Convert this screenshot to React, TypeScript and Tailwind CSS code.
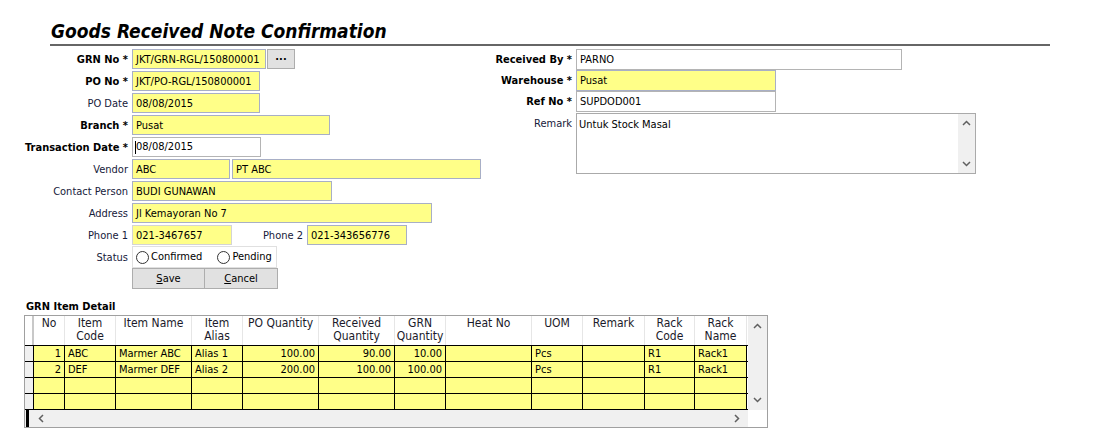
import React from "react";

const FONT = { fontFamily: '"DejaVu Sans Condensed", "DejaVu Sans", Tahoma, sans-serif' };

function Label({ text, bold, width = "w-[128px]" }: { text: string; bold?: boolean; width?: string }) {
  return (
    <div className={`${width} shrink-0 text-right pt-[4px] whitespace-nowrap ${bold ? "font-bold text-black" : "text-[#16203a]"}`}>
      {text}
    </div>
  );
}

function Box({ w, text, white, cls = "" }: { w: string; text?: string; white?: boolean; cls?: string }) {
  return (
    <div
      className={`${w} h-[20px] shrink-0 border px-[3px] leading-[19px] whitespace-nowrap overflow-hidden text-black ${
        white ? "bg-white border-[#b4b4b4]" : "bg-[#ffff88] border-[#a8afc6]"
      } ${cls}`}
    >
      {text}
    </div>
  );
}

function Row({ label, bold, children }: { label: string; bold?: boolean; children?: React.ReactNode }) {
  return (
    <div className="flex h-[22px] items-start">
      <Label text={label} bold={bold} />
      <div className="ml-[4px] flex pt-[1px]">{children}</div>
    </div>
  );
}

function RRow({ label, bold, children, h = "h-[22px]" }: { label: string; bold?: boolean; children?: React.ReactNode; h?: string }) {
  return (
    <div className={`flex ${h} items-start`}>
      <Label text={label} bold={bold} width="w-[82px]" />
      <div className="ml-[4px] flex pt-[1px]">{children}</div>
    </div>
  );
}

function Radio({ text }: { text: string }) {
  return (
    <div className="flex items-center">
      <span className="w-[13px] h-[13px] rounded-full border border-[#333] bg-white inline-block" />
      <span className="ml-[2px] text-black">{text}</span>
    </div>
  );
}

function Up() {
  return (
    <svg width="9" height="6" viewBox="0 0 9 6">
      <path d="M1 5 L4.5 1.5 L8 5" stroke="#606060" strokeWidth="1.5" fill="none" />
    </svg>
  );
}
function Down() {
  return (
    <svg width="9" height="6" viewBox="0 0 9 6">
      <path d="M1 1 L4.5 4.5 L8 1" stroke="#606060" strokeWidth="1.5" fill="none" />
    </svg>
  );
}
function Left() {
  return (
    <svg width="6" height="9" viewBox="0 0 6 9">
      <path d="M5 1 L1.5 4.5 L5 8" stroke="#606060" strokeWidth="1.5" fill="none" />
    </svg>
  );
}
function Right() {
  return (
    <svg width="6" height="9" viewBox="0 0 6 9">
      <path d="M1 1 L4.5 4.5 L1 8" stroke="#606060" strokeWidth="1.5" fill="none" />
    </svg>
  );
}

const cols: { w: number; head: string[]; align: "left" | "right" }[] = [
  { w: 31, head: ["No"], align: "right" },
  { w: 51, head: ["Item", "Code"], align: "left" },
  { w: 76, head: ["Item Name"], align: "left" },
  { w: 51, head: ["Item", "Alias"], align: "left" },
  { w: 76, head: ["PO Quantity"], align: "right" },
  { w: 76, head: ["Received", "Quantity"], align: "right" },
  { w: 51, head: ["GRN", "Quantity"], align: "right" },
  { w: 86, head: ["Heat No"], align: "left" },
  { w: 51, head: ["UOM"], align: "left" },
  { w: 62, head: ["Remark"], align: "left" },
  { w: 50, head: ["Rack", "Code"], align: "left" },
  { w: 52, head: ["Rack", "Name"], align: "left" },
];

const rows: string[][] = [
  ["1", "ABC", "Marmer ABC", "Alias 1", "100.00", "90.00", "10.00", "", "Pcs", "", "R1", "Rack1"],
  ["2", "DEF", "Marmer DEF", "Alias 2", "200.00", "100.00", "100.00", "", "Pcs", "", "R1", "Rack1"],
  ["", "", "", "", "", "", "", "", "", "", "", ""],
  ["", "", "", "", "", "", "", "", "", "", "", ""],
];

function Grid() {
  return (
    <div className="ml-[24px] w-[744px] h-[113px] border border-[#a0a0a0] flex bg-white">
      <div className="w-[723px] flex flex-col">
        <div className="flex h-[30px] border-b border-black">
          <div className="w-[9px] shrink-0 border-r-2 border-[#c8c8c8]" />
          {cols.map((c, i) => (
            <div
              key={i}
              style={{ width: c.w }}
              className="shrink-0 text-center text-[12px] leading-[13px] pt-[1px] text-[#1a1a2a] border-r border-[#e6e6e6] whitespace-nowrap"
            >
              {c.head.map((h, j) => (
                <div key={j}>{h}</div>
              ))}
            </div>
          ))}
        </div>
        {rows.map((r, ri) => (
          <div key={ri} className="flex h-[16px] border-b border-black">
            <div className="w-[9px] shrink-0 bg-[#f0f0f0] border-r border-black" />
            {r.map((v, ci) => (
              <div
                key={ci}
                style={{ width: cols[ci].w }}
                className={`shrink-0 bg-[#ffff88] border-r border-black leading-[15px] px-[3px] whitespace-nowrap overflow-hidden text-black ${
                  cols[ci].align === "right" ? "text-right" : "text-left"
                }`}
              >
                {v}
              </div>
            ))}
          </div>
        ))}
        <div className="flex-1" />
        <div className="h-[17px] bg-[#f0f0f0] flex items-center relative">
          <div className="absolute left-[1px] top-0 bottom-0 w-[3px] bg-black" />
          <div className="ml-[13px]">
            <Left />
          </div>
          <div className="flex-1" />
          <div className="mr-[8px]">
            <Right />
          </div>
        </div>
      </div>
      <div className="w-[19px] flex flex-col">
        <div className="flex-1 bg-[#f0f0f0] flex flex-col items-center justify-between pt-[7px] pb-[7px]">
          <Up />
          <Down />
        </div>
        <div className="h-[17px] bg-white" />
      </div>
    </div>
  );
}

export default function App() {
  return (
    <div className="w-[1117px] h-[447px] bg-white text-[11px] relative overflow-hidden" style={FONT}>
      <div
        className="ml-[51px] pt-[19px] h-[44px] text-[19px] leading-[24px] font-bold italic text-black whitespace-nowrap"
        style={{ fontFamily: '"DejaVu Sans Condensed", "DejaVu Sans", Verdana, sans-serif' }}
      >
        Goods Received Note Confirmation
      </div>
      <div className="ml-[50px] w-[1000px] h-[2px] bg-[#666]" />
      <div className="h-[2px]" />
      <div className="flex">
        <div className="w-[490px] shrink-0">
          <Row label="GRN No *" bold>
            <Box w="w-[134px]" text="JKT/GRN-RGL/150800001" />
            <div className="ml-[1px] w-[28px] h-[20px] bg-[#e1e1e1] border border-[#adadad] font-bold text-center leading-[14px] text-black">
              ...
            </div>
          </Row>
          <Row label="PO No *" bold>
            <Box w="w-[128px]" text="JKT/PO-RGL/150800001" />
          </Row>
          <Row label="PO Date">
            <Box w="w-[128px]" text="08/08/2015" />
          </Row>
          <Row label="Branch *" bold>
            <Box w="w-[198px]" text="Pusat" />
          </Row>
          <Row label="Transaction Date *" bold>
            <div className="w-[129px] h-[20px] border border-[#b4b4b4] bg-white flex items-center pl-[2px] text-black">
              <span className="w-[1px] h-[13px] bg-black" />
              08/08/2015
            </div>
          </Row>
          <Row label="Vendor">
            <Box w="w-[98px]" text="ABC" />
            <Box w="w-[249px]" text="PT ABC" cls="ml-[2px]" />
          </Row>
          <Row label="Contact Person">
            <Box w="w-[200px]" text="BUDI GUNAWAN" />
          </Row>
          <Row label="Address">
            <Box w="w-[300px]" text="Jl Kemayoran No 7" />
          </Row>
          <Row label="Phone 1">
            <Box w="w-[100px]" text="021-3467657" cls="border-[#d4d4d4]" />
            <div className="w-[71px] text-right pt-[3px] text-[#16203a]">Phone 2</div>
            <Box w="w-[100px]" text="021-343656776" cls="ml-[4px]" />
          </Row>
          <div className="flex h-[22px] items-start">
            <Label text="Status" />
            <div className="ml-[4px] w-[145px] h-[22px] border border-[#e0e0e0] flex items-center pl-[3px] pt-[1px] gap-[15px]">
              <Radio text="Confirmed" />
              <Radio text="Pending" />
            </div>
          </div>
          <div className="flex h-[22px] items-start">
            <div className="w-[128px]" />
            <div className="ml-[4px] flex">
              <div className="w-[73px] h-[21px] bg-[#e1e1e1] border border-[#adadad] text-center leading-[20px] text-black">
                <span className="underline">S</span>ave
              </div>
              <div className="w-[73px] h-[21px] bg-[#e1e1e1] border border-[#adadad] border-l-0 text-center leading-[20px] text-black">
                <span className="underline">C</span>ancel
              </div>
            </div>
          </div>
        </div>
        <div>
          <RRow label="Received By *" bold h="h-[21px]">
            <Box w="w-[326px]" text="PARNO" white cls="h-[21px]" />
          </RRow>
          <RRow label="Warehouse *" bold h="h-[21px]">
            <Box w="w-[200px]" text="Pusat" cls="h-[21px]" />
          </RRow>
          <RRow label="Ref No *" bold h="h-[22px]">
            <Box w="w-[200px]" text="SUPDOD001" white cls="h-[21px]" />
          </RRow>
          <div className="flex">
            <Label text="Remark" width="w-[82px]" />
            <div className="ml-[4px] mt-[1px] w-[400px] h-[61px] border border-[#aaa] bg-white flex">
              <div className="flex-1 px-[2px] pt-[3px] text-black">Untuk Stock Masal</div>
              <div className="w-[17px] bg-[#f0f0f0] flex flex-col items-center justify-between py-[6px]">
                <Up />
                <Down />
              </div>
            </div>
          </div>
        </div>
      </div>
      <div className="ml-[26px] mt-[10px] h-[14px] font-bold text-black leading-[14px]">GRN Item Detail</div>
      <div className="h-[1px]" />
      <Grid />
    </div>
  );
}
